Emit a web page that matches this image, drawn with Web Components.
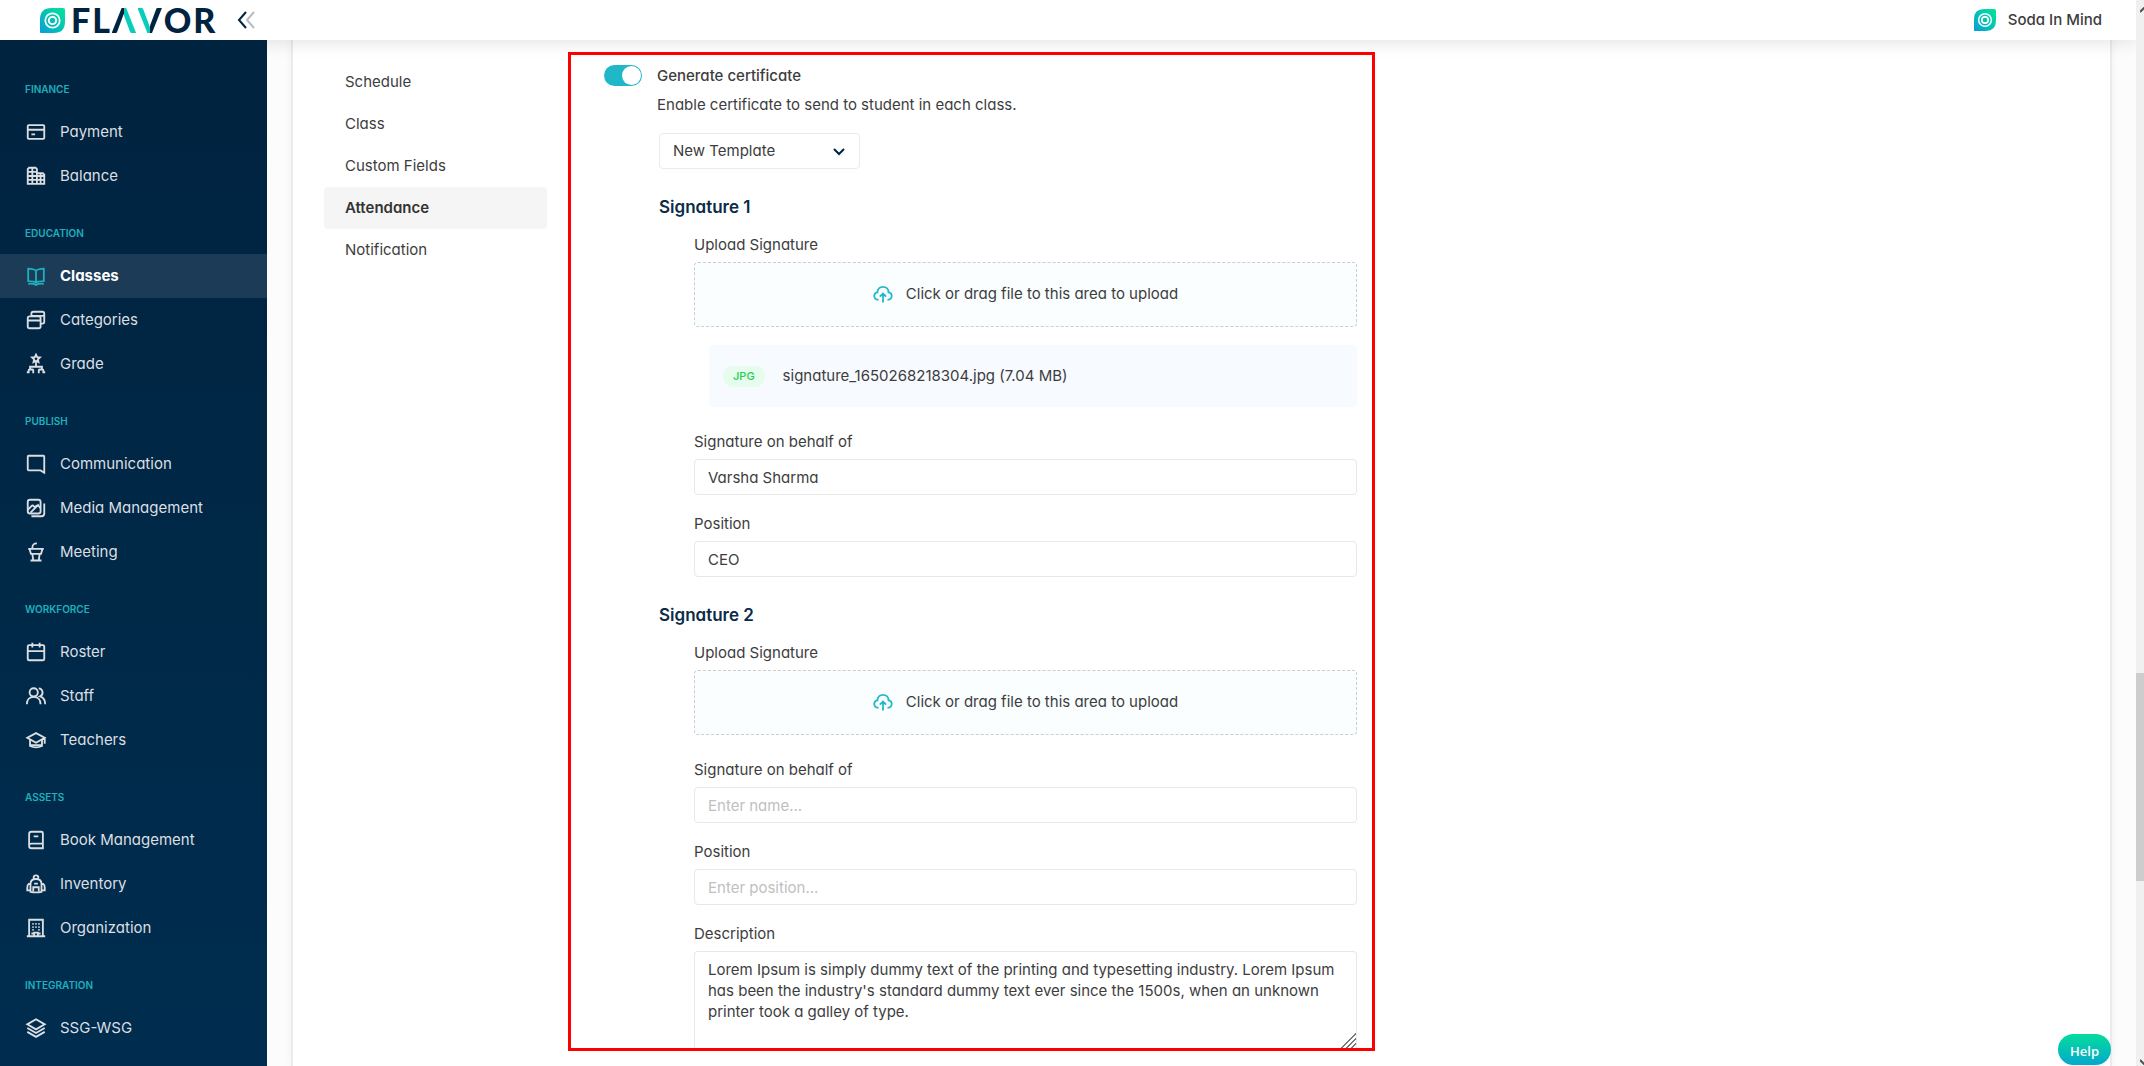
<!DOCTYPE html>
<html lang="en">
<head>
<meta charset="utf-8">
<title>Class settings - Attendance</title>
<style>
  body {
    margin: 0;
    font: 15px/20px Inter, "Open Sans", sans-serif;
    font-feature-settings: "cv11";
    color: #3d3d3d;
    background: #fcfcfc;
  }
</style>
</head>
<body>
<flavor-app>
  <top-bar slot="header" user="Soda In Mind"></top-bar>
  <side-bar slot="sidebar">
    <nav-group label="Finance">
      <nav-item icon="payment">Payment</nav-item>
      <nav-item icon="balance">Balance</nav-item>
    </nav-group>
    <nav-group label="Education">
      <nav-item icon="classes" active>Classes</nav-item>
      <nav-item icon="categories">Categories</nav-item>
      <nav-item icon="grade">Grade</nav-item>
    </nav-group>
    <nav-group label="Publish">
      <nav-item icon="chat">Communication</nav-item>
      <nav-item icon="media">Media Management</nav-item>
      <nav-item icon="meeting">Meeting</nav-item>
    </nav-group>
    <nav-group label="Workforce">
      <nav-item icon="roster">Roster</nav-item>
      <nav-item icon="staff">Staff</nav-item>
      <nav-item icon="teachers">Teachers</nav-item>
    </nav-group>
    <nav-group label="Assets">
      <nav-item icon="book">Book Management</nav-item>
      <nav-item icon="inventory">Inventory</nav-item>
      <nav-item icon="organization">Organization</nav-item>
    </nav-group>
    <nav-group label="Integration">
      <nav-item icon="layers">SSG-WSG</nav-item>
    </nav-group>
  </side-bar>

  <settings-card>
    <settings-tabs slot="tabs">
      <settings-tab>Schedule</settings-tab>
      <settings-tab>Class</settings-tab>
      <settings-tab>Custom Fields</settings-tab>
      <settings-tab active>Attendance</settings-tab>
      <settings-tab>Notification</settings-tab>
    </settings-tabs>
    <highlight-frame>
      <toggle-row label="Generate certificate" hint="Enable certificate to send to student in each class."></toggle-row>
      <template-select></template-select>
      <signature-block heading="Signature 1">
        <upload-zone>
          <file-row type="JPG">signature_1650268218304.jpg (7.04 MB)</file-row>
        </upload-zone>
        <text-field label="Signature on behalf of" value="Varsha Sharma"></text-field>
        <text-field label="Position" value="CEO"></text-field>
      </signature-block>
      <signature-block heading="Signature 2">
        <upload-zone></upload-zone>
        <text-field label="Signature on behalf of" placeholder="Enter name..."></text-field>
        <text-field label="Position" placeholder="Enter position..."></text-field>
        <text-field label="Description" multiline value="Lorem Ipsum is simply dummy text of the printing and typesetting industry. Lorem Ipsum has been the industry's standard dummy text ever since the 1500s, when an unknown printer took a galley of type."></text-field>
      </signature-block>
    </highlight-frame>
  </settings-card>
  <scroll-track slot="scroll"></scroll-track>
  <help-button slot="help">Help</help-button>
</flavor-app>

<script>
const icons = {
  payment: '<rect x="3" y="4.5" width="18" height="15" rx="1"/><path d="M3 9.5h18M7 14.5h4"/>',
  balance: '<path d="M3 20.5v-16l1.500-1.500h7l1.500 1.500v16zM13 9h6.500l1.500 1.500v10h-8M3 7.500h10M3 12h18M3 16.200h18M8 3v17M17 9v11"/>',
  classes: '<path d="M12 6.500C10 4.300 7 4 3.500 4v13.500c3.500 0 6.500.3 8.500 1.500 2-1.200 5-1.500 8.500-1.500V4C17 4 14 4.300 12 6.500zV19M3.500 20.500c3.500-.3 6.500 0 8.500 1.200 2-1.200 5-1.500 8.500-1.200"/>',
  categories: '<rect x="3" y="8" width="14" height="13" rx="2"/><path d="M3 12.500h14M7 8V5q0-2 2-2h10q2 0 2 2v9q0 2-2 2h-2M7 7.500h14"/>',
  grade: '<path d="M12 1.800l1.300 2.700 3 .4-2.200 2.100.6 3L12 8.600 9.300 10l.6-3-2.200-2.100 3-.4zM12 10v5M4 21v-2q0-1 1-1h3q1 0 1 1v2M5.500 18v-3h13v3M15 21v-2q0-1 1-1h3q1 0 1 1v2M2 21h3M8 21h2M14 21h2M19 21h3"/>',
  chat: '<path d="M21 21.500L17 19H4q-1 0-1-1V4q0-1 1-1h16q1 0 1 1z"/>',
  media: '<rect x="3" y="3" width="14" height="15" rx="2.500"/><path d="M3 14l4-4q1.500-1.500 2.500 0t2.500 0 3 0l2 2M6 17L15 8M21 7v11q0 3-3 3H7"/>',
  meeting: '<path d="M3.500 8.500h17M5 9l1.500 5h11L19 9M8 14l1 7M16 14l-1 7M6 21.300h12M8 8c0-4 1-5.500 5-5.500"/>',
  roster: '<rect x="3" y="4.500" width="18" height="16.500" rx="1.500"/><path d="M3 11h18M8 2v5M16 2v5"/>',
  staff: '<circle cx="9.500" cy="8" r="4.500"/><path d="M2 21c0-5 3-8 7.500-8s7.500 3 7.500 8M15 3.700a4.500 4.500 0 0 1 1.500 8.600c3.500 1 5.500 4.200 5.500 8.700"/>',
  teachers: '<path d="M12 4.500L2.500 9.500 12 15l9.500-5.500zM5.500 12v6.500q3 1.500 6.500 1.500t6.500-1.500V12M21.500 10v6M6 17.500h12"/>',
  book: '<path d="M19.500 21H7q-2.500 0-2.500-2.500v-13Q4.500 3 7 3h11q1.500 0 1.500 1.500zM4.500 17.500Q5 16 7 16h12.500M9.500 8h5"/>',
  inventory: '<path d="M6 20.500V12q0-5.500 6-5.500t6 5.500v8.500q-6 1.200-12 0zM9.500 7V4.500Q9.500 2.500 12 2.500t2.500 2V7M6 12H4q-1.500 1-1.500 4v3H6M18 12h2q1.500 1 1.500 4v3H18M9 20v-4.500h6V20M10 11.500h4"/>',
  organization: '<path d="M4.500 21V3h15v18M2 21h20M10 21v-4h4v4M8 7.500h1.500M11.200 7.500h1.500M14.500 7.500H16M8 11h1.500M11.200 11h1.500M14.500 11H16M8 14h1.500M14.500 14H16M8 17v2M16 17v2"/>',
  layers: '<path d="M12 2.500L21.500 8 12 13.500 2.500 8zM2.500 12L12 17.500 21.500 12M2.500 16.200L12 21.700l9.500-5.500"/>'
};

const mark = `
  <svg viewBox="0 0 26 26" aria-hidden="true">
    <defs><linearGradient id="g" x1="1" y1="0" x2="0" y2="1">
      <stop offset="0" stop-color="#05e495"/><stop offset="1" stop-color="#04a0d6"/>
    </linearGradient></defs>
    <path fill="url(#g)" d="M12 0h12q2 0 2 2v12q0 12-12 12H1q-1 0-1-1V12Q0 0 12 0z"/>
    <circle cx="13" cy="13" r="7.500" fill="none" stroke="#fff" stroke-width="1.800"/>
    <circle cx="13" cy="13" r="3.800" fill="none" stroke="#fff" stroke-width="2"/>
  </svg>`;

class FlavorElement extends HTMLElement {
  constructor() {
    super();
    this.attachShadow({ mode: 'open' });
  }
  connectedCallback() {
    this.shadowRoot.innerHTML = `<style>*{box-sizing:border-box}${this.css()}</style>${this.html()}`;
  }
  attr(name) {
    return this.getAttribute(name) || '';
  }
}

customElements.define('flavor-app', class extends FlavorElement {
  css() { return `
    :host { display: grid; grid-template: auto 1fr / auto 1fr 8px; height: 100vh; overflow: hidden; }
    .header { grid-column: 1 / 3; position: relative; z-index: 1; }
    .sidebar { grid-row: 2; position: relative; z-index: 2; min-height: 0; overflow: hidden; }
    main { min-height: 0; min-width: 0; overflow: hidden; padding: 0 24px; display: flex; }
    main ::slotted(*) { flex: 1; }
    .scroll { grid-area: 1 / 3 / 3 / 4; display: grid; position: relative; z-index: 2; }
  `; }
  html() { return `
    <div class="header"><slot name="header"></slot></div>
    <div class="sidebar"><slot name="sidebar"></slot></div>
    <main><slot></slot></main>
    <div class="scroll"><slot name="scroll"></slot></div>
    <slot name="help"></slot>
  `; }
});

customElements.define('top-bar', class extends FlavorElement {
  css() { return `
    :host { display: block; background: #fff; box-shadow: 0 0 20px rgba(0, 0, 0, .14); }
    header { display: flex; align-items: center; height: 40px; padding: 0 34px 0 40px; }
    .logo { display: flex; align-items: center; gap: 6px; text-decoration: none; color: #00233f; }
    .logo svg { width: 25px; height: 25px; }
    .word { display: flex; gap: 2px; font: 900 34px/40px Lato, sans-serif; }
    .a, .v { color: transparent; -webkit-background-clip: text; background-clip: text; }
    .a { background-image: linear-gradient(90deg, #00233f 48%, #08cdbb 48%); }
    .v { background-image: linear-gradient(90deg, #08cdbb 52%, #00233f 52%); }
    button { border: 0; padding: 0; background: none; margin-left: 21px; display: flex; }
    button svg { width: 20px; height: 20px; fill: none; stroke-width: 2; }
    .user { margin-left: auto; display: flex; align-items: center; gap: 12px; font-weight: 500; color: #3d3d3d; text-decoration: none; }
    .user svg { width: 22px; height: 22px; }
  `; }
  html() { return `
    <header>
      <a class="logo" href="#">${mark}<span class="word"><span>F</span><span>L</span><span class="a">Λ</span><span class="v">V</span><span>O</span><span>R</span></span></a>
      <button type="button" aria-label="Collapse menu">
        <svg viewBox="0 0 20 20"><path stroke="#00233f" d="M10 2L3 10l7 8"/><path stroke="#b4bdc6" d="M18 2l-7 8 7 8"/></svg>
      </button>
      <a class="user" href="#">${mark}<span>${this.attr('user')}</span></a>
    </header>
  `; }
});

customElements.define('side-bar', class extends FlavorElement {
  css() { return `
    :host { display: block; width: 267px; height: 100%; background: linear-gradient(#00233f, #002d4f); }
    nav { padding-top: 14px; }
  `; }
  html() { return `<nav><slot></slot></nav>`; }
});

customElements.define('nav-group', class extends FlavorElement {
  css() { return `
    :host { display: block; }
    h2 { margin: 0; padding: 25px 25px 11px; font-size: 10px; line-height: 20px; font-weight: 600; text-transform: uppercase; color: #1fb0bd; }
  `; }
  html() { return `<h2>${this.attr('label')}</h2><slot></slot>`; }
});

customElements.define('nav-item', class extends FlavorElement {
  css() { return `
    :host { display: block; color: #dcdfe2; }
    :host([active]) { background: #1b3b56; color: #fff; font-weight: 700; }
    a { display: flex; align-items: center; gap: 13px; height: 44px; padding: 0 25px; color: inherit; text-decoration: none; }
    svg { width: 22px; height: 22px; fill: none; stroke: currentColor; stroke-width: 2; }
    :host([active]) svg { stroke: #1fb0bd; }
  `; }
  html() { return `
    <a href="#"><svg viewBox="0 0 24 24" aria-hidden="true">${icons[this.attr('icon')]}</svg><slot></slot></a>
  `; }
});

customElements.define('settings-card', class extends FlavorElement {
  css() { return `
    :host { display: flex; align-items: flex-start; gap: 21px; padding: 0 31px; min-height: 100%; box-sizing: border-box;
      background: #fff; border: solid #ebebeb; border-width: 0 2px; box-shadow: 0 0 8px rgba(0, 0, 0, .05); }
    .tabs { width: 223px; padding-top: 21px; }
    .panel { flex: 0 1 807px; padding-top: 12px; }
  `; }
  html() { return `
    <div class="tabs"><slot name="tabs"></slot></div>
    <div class="panel"><slot></slot></div>
  `; }
});

customElements.define('settings-tabs', class extends FlavorElement {
  css() { return `:host { display: block; }`; }
  html() { return `<nav><slot></slot></nav>`; }
});

customElements.define('settings-tab', class extends FlavorElement {
  css() { return `
    :host { display: block; }
    a { display: block; padding: 11px 21px; color: inherit; text-decoration: none; border-radius: 4px; }
    :host([active]) a { background: #f5f5f5; font-weight: 600; color: #333; }
  `; }
  html() { return `<a href="#"><slot></slot></a>`; }
});

customElements.define('highlight-frame', class extends FlavorElement {
  css() { return `:host { display: block; border: 3px solid #f00; padding: 10px 15px 0 33px; }`; }
  html() { return `<slot></slot>`; }
});

customElements.define('toggle-row', class extends FlavorElement {
  css() { return `
    :host { display: grid; grid-template-columns: 38px 1fr; column-gap: 15px; row-gap: 9px; align-items: center; }
    input { appearance: none; margin: 0; width: 38px; height: 21px; padding: 1px; border-radius: 11px; background: #b8b8b8; display: flex; }
    input::before { content: ""; width: 19px; height: 19px; border-radius: 10px; background: #fff; }
    input:checked { background: #20b8c9; justify-content: flex-end; }
    label { font-weight: 500; }
    p { grid-column: 2; margin: 0; }
  `; }
  html() { return `
    <input type="checkbox" role="switch" id="toggle" checked>
    <label for="toggle">${this.attr('label')}</label>
    <p>${this.attr('hint')}</p>
  `; }
});

customElements.define('template-select', class extends FlavorElement {
  css() { return `
    :host { display: grid; width: 201px; margin: 18px 0 27px 55px; align-items: center; }
    select, svg { grid-area: 1 / 1; }
    select { appearance: none; width: 100%; height: 36px; padding: 0 36px 0 13px; border: 1px solid #ebebeb; border-radius: 4px; background: #fff; font: inherit; font-feature-settings: inherit; color: inherit; }
    svg { justify-self: end; width: 12px; height: 12px; margin-right: 15px; fill: none; stroke: #00233f; stroke-width: 2; pointer-events: none; }
  `; }
  html() { return `
    <select aria-label="Certificate template"><option>New Template</option></select>
    <svg viewBox="0 0 12 12" aria-hidden="true"><path d="M1 4l5 5 5-5"/></svg>
  `; }
});

customElements.define('signature-block', class extends FlavorElement {
  css() { return `
    :host { display: block; margin-left: 55px; }
    :host(:not(:last-child)) { margin-bottom: 27px; }
    h3 { margin: 0 0 17px; font-size: 17px; line-height: 22px; font-weight: 600; color: #0b2c48; }
    .fields { display: grid; gap: 19px; margin-left: 35px; }
  `; }
  html() { return `<h3>${this.attr('heading')}</h3><div class="fields"><slot></slot></div>`; }
});

customElements.define('upload-zone', class extends FlavorElement {
  css() { return `
    :host { display: block; margin-bottom: 6px; }
    .title { margin-bottom: 7px; }
    label { display: flex; align-items: center; justify-content: center; gap: 13px; height: 65px; padding-bottom: 2px; border: 1px dashed #c8ced1; border-radius: 4px; background: #fafeff; }
    input { position: absolute; width: 1px; height: 1px; opacity: 0; }
    svg { width: 20px; height: 18px; fill: none; stroke: #20b8c9; stroke-width: 2; }
  `; }
  html() { return `
    <div class="title">Upload Signature</div>
    <label for="file">
      <svg viewBox="0 0 22 20" aria-hidden="true"><path d="M6 16.500C0 16 0 9 4.800 8.200 5 0 17 0 17.200 8.200 22 9 22 16 16 16.500M11 19.500V10M7.500 13L11 9.500l3.500 3.500"/></svg>
      <span>Click or drag file to this area to upload</span>
    </label>
    <input type="file" id="file">
    <slot></slot>
  `; }
});

customElements.define('file-row', class extends FlavorElement {
  css() { return `
    :host { display: flex; align-items: center; gap: 18px; height: 62px; margin: 18px 0 0 15px; padding: 0 14px; box-sizing: border-box; border-radius: 4px; background: #f7faff; }
    .type { padding: 0 10px; border-radius: 10px; background: #e6fcec; font-size: 11px; line-height: 21px; font-weight: 500; color: #22cf52; }
  `; }
  html() { return `<span class="type">${this.attr('type')}</span><span><slot></slot></span>`; }
});

customElements.define('text-field', class extends FlavorElement {
  css() { return `
    :host { display: grid; gap: 7px; }
    input, textarea { display: block; width: 100%; margin: 0; border: 1px solid #e8e8e8; border-radius: 4px; background: #fff; font: inherit; font-feature-settings: inherit; color: inherit; }
    input { height: 36px; padding: 0 13px; }
    textarea { height: 97px; padding: 7px 13px; line-height: 21px; border-bottom: 0; border-radius: 4px 4px 0 0; resize: vertical; }
    textarea::-webkit-scrollbar { width: 18px; height: 18px; }
    textarea::-webkit-resizer { background: linear-gradient(135deg, transparent 50%, #777 50% 55%, transparent 55% 66%, #777 66% 71%, transparent 71% 82%, #777 82% 87%, transparent 87%); }
    ::placeholder { color: #bfbfbf; opacity: 1; }
  `; }
  html() {
    const field = this.hasAttribute('multiline')
      ? `<textarea id="field">${this.attr('value')}</textarea>`
      : `<input type="text" id="field" value="${this.attr('value')}" placeholder="${this.attr('placeholder')}">`;
    return `<label for="field">${this.attr('label')}</label>${field}`;
  }
});

customElements.define('scroll-track', class extends FlavorElement {
  css() { return `
    :host { display: grid; grid-template-rows: 673fr 208fr 185fr; background: #f0f0f0; overflow: hidden; position: relative; }
    .thumb { grid-row: 2; background: #cdcdcd; }
    svg { position: absolute; left: 4px; width: 8px; height: 6px; fill: none; stroke: #505050; stroke-width: 2; }
    .up { top: 7px; }
    .down { bottom: 1px; }
  `; }
  html() { return `
    <svg class="up" viewBox="0 0 8 6"><path d="M0 5l4-4 4 4"/></svg>
    <div class="thumb"></div>
    <svg class="down" viewBox="0 0 8 6"><path d="M0 1l4 4 4-4"/></svg>
  `; }
});

customElements.define('help-button', class extends FlavorElement {
  css() { return `
    :host { position: fixed; right: 33px; bottom: 1px; z-index: 3; }
    button { border: 0; padding: 2px 12px 0; height: 31px; border-radius: 16px; background: linear-gradient(#04dc9e, #04a8cc); font: 600 13px/20px "Open Sans", sans-serif; color: #fff; }
  `; }
  html() { return `<button type="button"><slot></slot></button>`; }
});
</script>
</body>
</html>
